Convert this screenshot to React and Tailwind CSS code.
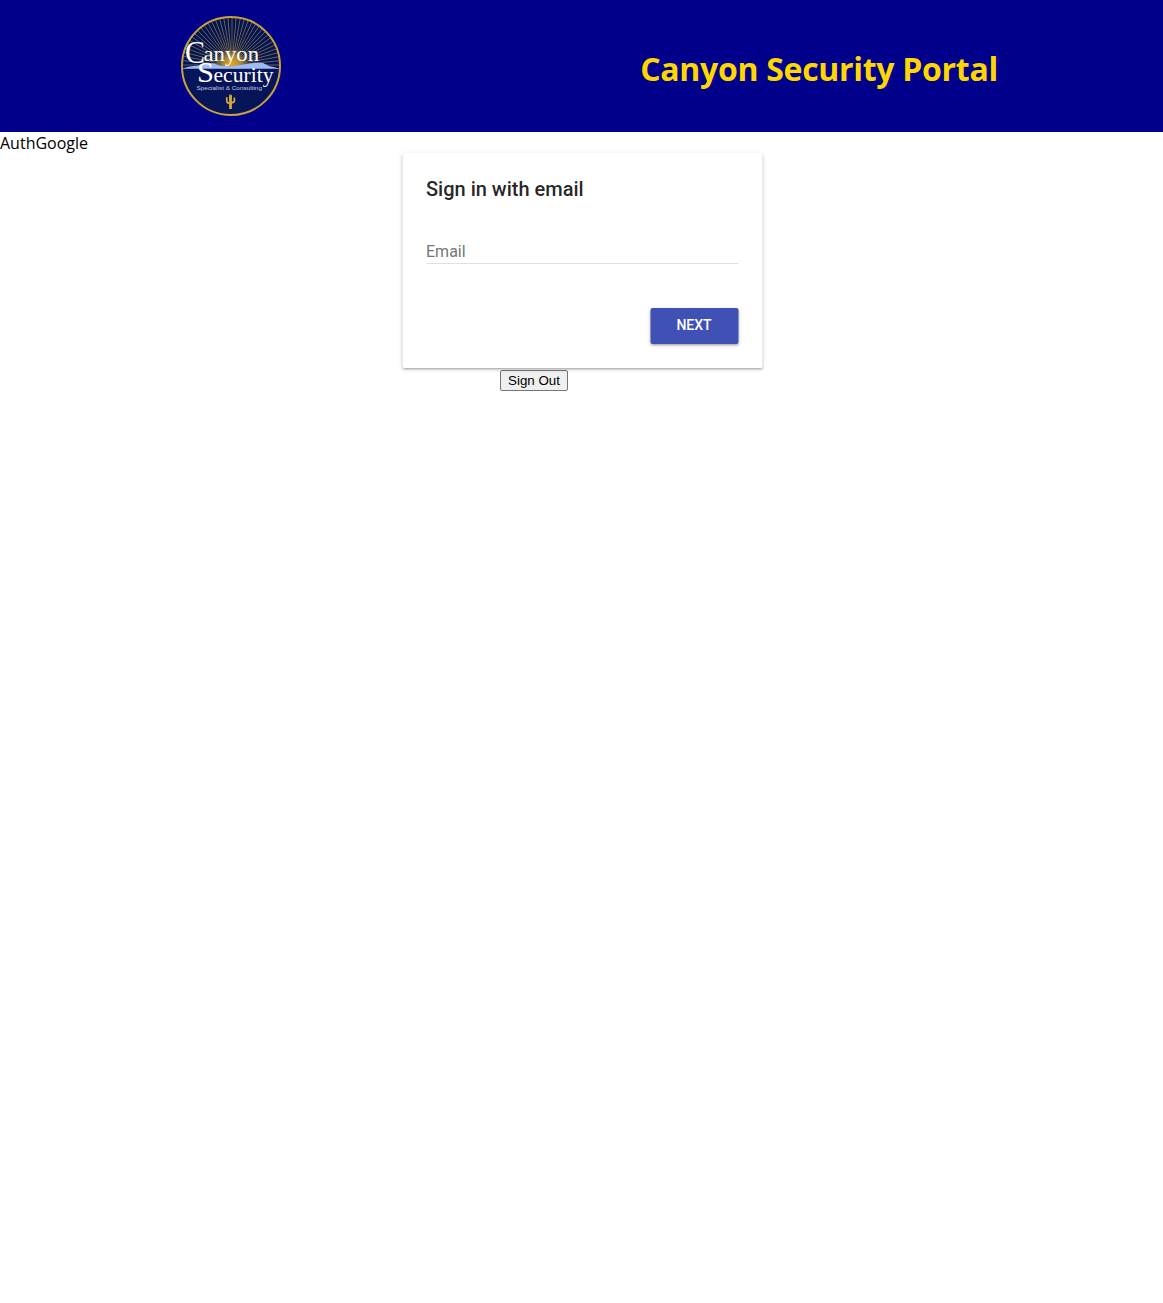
import React from "react";

const RAYS = Array.from({ length: 37 }, (_, i) => {
  const a = Math.PI + (i * Math.PI) / 36;
  return { x: 51 + 90 * Math.cos(a), y: 49 + 90 * Math.sin(a) };
});

function Logo() {
  return (
    <svg className="block size-[100px]" viewBox="0 0 100 100" role="img" aria-label="Canyon Security">
      <defs>
        <clipPath id="disc">
          <circle cx="50" cy="50" r="48.5" />
        </clipPath>
        <radialGradient id="sun" gradientUnits="userSpaceOnUse" cx="51" cy="49" r="16">
          <stop offset="0" stopColor="#e0a823" />
          <stop offset="0.45" stopColor="#c79a2a" stopOpacity="0.8" />
          <stop offset="1" stopColor="#c79a2a" stopOpacity="0" />
        </radialGradient>
      </defs>
      <circle cx="50" cy="50" r="49" fill="#06145a" />
      <g clipPath="url(#disc)">
        {RAYS.map((r, i) => (
          <line key={i} x1="51" y1="49" x2={r.x} y2={r.y} stroke="#b3923b" strokeWidth="0.75" opacity="0.85" />
        ))}
        <circle cx="51" cy="49" r="16" fill="url(#sun)" />
        <rect x="0" y="52.5" width="100" height="48" fill="#06145a" />
        <path d="M0 52.8 L9 50.5 L17 49.5 L25 47.5 L32 47.2 L39 49.5 L49 50.5 L59 49 L67 47.8 L74 46.8 L82 47 L88 50 L100 52.8Z" fill="#9dbcf5" />
      </g>
      <circle cx="50" cy="50" r="49" fill="none" stroke="#c9a23c" strokeWidth="2" />
      <g fill="#fff" fontFamily="'Liberation Serif', serif">
        <text x="4" y="46.5" fontSize="32" textLength="20" lengthAdjust="spacingAndGlyphs">C</text>
        <text x="22.5" y="45" fontSize="21" textLength="55.5" lengthAdjust="spacingAndGlyphs">anyon</text>
        <text x="16" y="66" fontSize="29" textLength="17" lengthAdjust="spacingAndGlyphs">S</text>
        <text x="32.5" y="66" fontSize="21" textLength="60" lengthAdjust="spacingAndGlyphs">ecurity</text>
      </g>
      <text x="15.5" y="73.6" fontSize="6" fill="#c5cbe3" fontFamily="'Liberation Sans', sans-serif" textLength="65.5" lengthAdjust="spacingAndGlyphs">
        Specialist &amp; Consulting
      </text>
      <g fill="none" stroke="#d5a936" strokeLinecap="round" strokeLinejoin="round">
        <path d="M49.5 80V93" strokeWidth="2.8" strokeLinecap="butt" />
        <path d="M45.8 81.8V85.2Q45.8 87.2 49.5 87.2M53.4 82.2V84.8Q53.4 86.8 49.5 86.8" strokeWidth="1.7" />
        <path d="M49.5 79.8V82" strokeWidth="2.8" />
      </g>
    </svg>
  );
}

export default function App() {
  return (
    <div className="min-h-screen bg-white text-black font-['Open_Sans',sans-serif]">
      <header className="flex h-[132px] items-center justify-around bg-[#00008b] pl-[1px]">
        <Logo />
        <h1 className="mt-[5px] w-[343px] whitespace-nowrap text-[32px] leading-[43px] font-bold tracking-[-0.3px] text-[#ffd700]">
          Canyon Security Portal
        </h1>
      </header>
      <main>
        <div className="h-[21px] text-[16px] leading-[23px]">AuthGoogle</div>
        <form
          className="mx-auto h-[215px] w-[360px] translate-x-[0.5px] rounded-[2px] bg-white px-6 pt-6 font-[Roboto,sans-serif] shadow-[0_2px_2px_0_rgba(0,0,0,0.14),0_3px_1px_-2px_rgba(0,0,0,0.2),0_1px_5px_0_rgba(0,0,0,0.12)]"
          onSubmit={(e) => e.preventDefault()}
        >
          <h2 className="text-[20px] leading-6 font-medium text-black/87">Sign in with email</h2>
          <input
            type="email"
            placeholder="Email"
            className="mt-[38px] block h-[25px] w-full border-b border-black/12 p-0 text-[16px] leading-6 outline-none placeholder:text-[#757575]"
          />
          <div className="mt-[44px] flex justify-end">
            <button
              type="submit"
              className="h-9 w-[88px] rounded-[2px] bg-[#3f51b5] pb-px text-[14px] font-medium text-white shadow-[0_2px_2px_0_rgba(0,0,0,0.14),0_3px_1px_-2px_rgba(0,0,0,0.2),0_1px_5px_0_rgba(0,0,0,0.12)]"
            >
              NEXT
            </button>
          </div>
        </form>
        <button
          type="button"
          className="mt-[2px] ml-[500px] block h-[21px] w-[68px] whitespace-nowrap rounded-[2px] border border-[#767676] bg-[#efefef] font-['Liberation_Sans',sans-serif] text-[13.333px] leading-[19px]"
        >
          Sign Out
        </button>
      </main>
    </div>
  );
}
